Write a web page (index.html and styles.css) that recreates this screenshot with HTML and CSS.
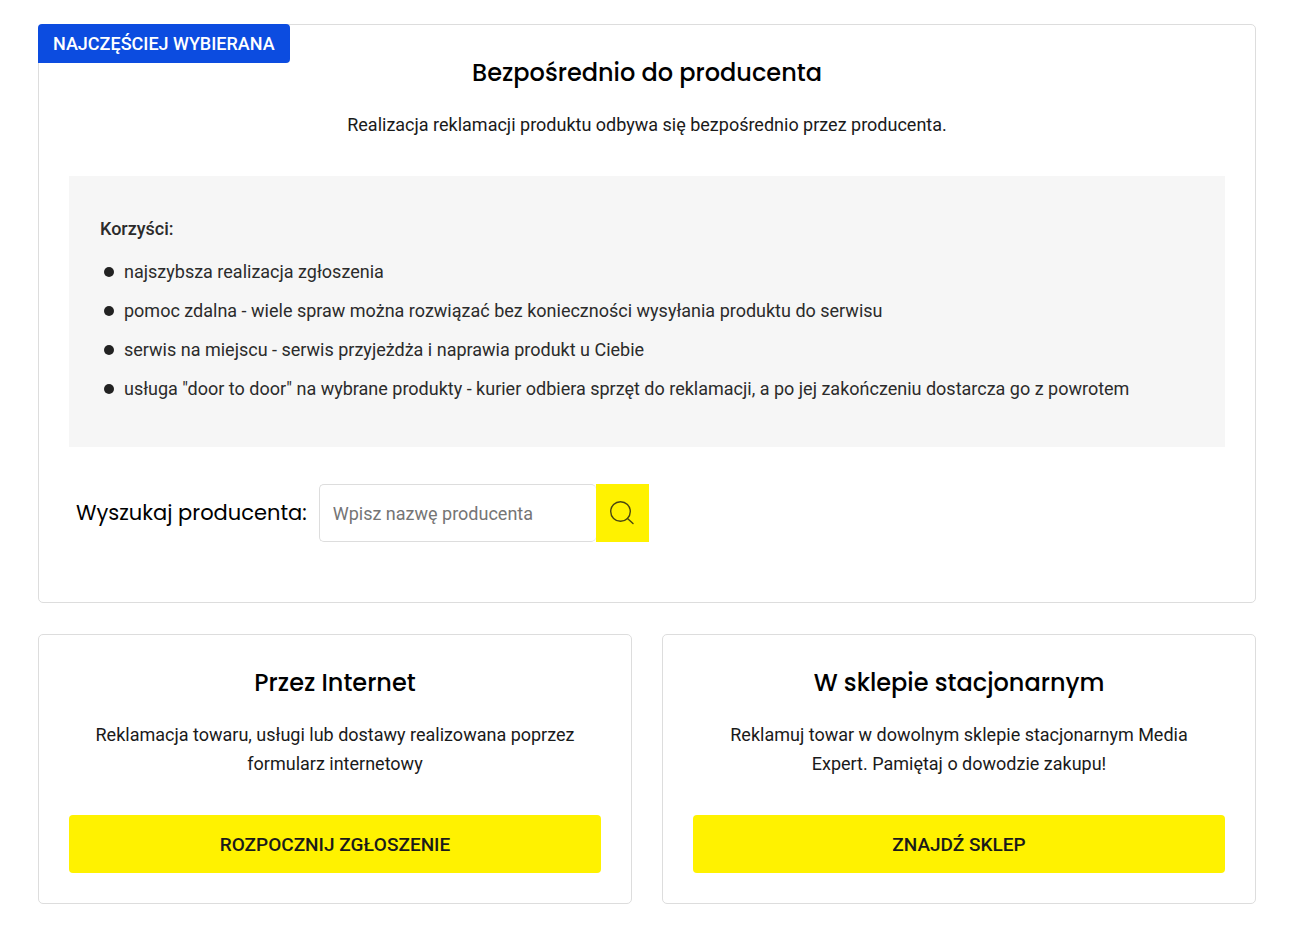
FILE: index.html
```
<!DOCTYPE html>
<html lang="pl">
<head>
<meta charset="utf-8">
<title>Reklamacje</title>
<link rel="stylesheet" href="styles.css">
</head>
<body>
<main class="options">
  <section class="card card-main">
    <span class="badge">NAJCZĘŚCIEJ WYBIERANA</span>
    <h2 class="title">Bezpośrednio do producenta</h2>
    <p class="lead">Realizacja reklamacji produktu odbywa się bezpośrednio przez producenta.</p>
    <div class="benefits">
      <h3 class="benefits-title">Korzyści:</h3>
      <ul class="benefits-list">
        <li>najszybsza realizacja zgłoszenia</li>
        <li>pomoc zdalna - wiele spraw można rozwiązać bez konieczności wysyłania produktu do serwisu</li>
        <li>serwis na miejscu - serwis przyjeżdża i naprawia produkt u Ciebie</li>
        <li>usługa "door to door" na wybrane produkty - kurier odbiera sprzęt do reklamacji, a po jej zakończeniu dostarcza go z powrotem</li>
      </ul>
    </div>
    <form class="search">
      <label class="search-label" for="producer">Wyszukaj producenta:</label>
      <div class="search-box">
        <input class="search-input" id="producer" type="text" placeholder="Wpisz nazwę producenta">
        <button class="search-button" type="button" aria-label="Szukaj">
          <svg width="26" height="26" viewBox="0 0 26 26" fill="none" stroke="#4a4710" stroke-width="1.4" stroke-linecap="round"><circle cx="11.5" cy="11.5" r="9.8"/><path d="M18.5 18.5 24 23.5"/></svg>
        </button>
      </div>
    </form>
  </section>
  <div class="pair">
    <section class="card card-small">
      <h2 class="title">Przez Internet</h2>
      <p class="lead">Reklamacja towaru, usługi lub dostawy realizowana poprzez formularz internetowy</p>
      <button class="action" type="button">ROZPOCZNIJ ZGŁOSZENIE</button>
    </section>
    <section class="card card-small">
      <h2 class="title">W sklepie stacjonarnym</h2>
      <p class="lead">Reklamuj towar w dowolnym sklepie stacjonarnym Media Expert. Pamiętaj o dowodzie zakupu!</p>
      <button class="action" type="button">ZNAJDŹ SKLEP</button>
    </section>
  </div>
</main>
</body>
</html>
```
FILE: styles.css
```
* { box-sizing: border-box; }
body {
  margin: 0;
  background: #fff;
  color: #1a1a1a;
  font: 18px/29px Roboto, "Liberation Sans", sans-serif;
}
.options {
  display: grid;
  gap: 31px;
  padding: 24px 34px 34px 38px;
}
.card {
  position: relative;
  border: 1px solid #ddd;
  border-radius: 5px;
  padding: 30px;
}
.card-main { padding-bottom: 60px; }
.badge {
  position: absolute;
  top: -1px;
  left: -1px;
  padding: 0 15px;
  border-radius: 4px 4px 4px 0;
  background: #0c4ce0;
  color: #fff;
  font-size: 18px;
  font-weight: 500;
  line-height: 39px;
}
.title {
  margin: 0;
  color: #000;
  font: 500 24px/36px Poppins, Lato, sans-serif;
  text-align: center;
}
.lead {
  margin: 19px 0 37px;
  padding: 0 8px;
  text-align: center;
}
.benefits {
  padding: 38px 31px 44px;
  background: #f6f6f6;
  color: #2b2b2b;
}
.benefits-title {
  margin: 0 0 14px;
  font-size: 18px;
  font-weight: 500;
  line-height: 29px;
}
.benefits-list {
  display: grid;
  gap: 10px;
  margin: 0;
  padding: 0;
  list-style: none;
}
.benefits-list li {
  display: flex;
  align-items: center;
  gap: 10px;
  padding-left: 4px;
}
.benefits-list li::before {
  content: "";
  flex: none;
  width: 10px;
  height: 10px;
  border-radius: 50%;
  background: #222;
}
.search {
  display: flex;
  align-items: center;
  gap: 12px;
  margin-top: 37px;
  padding-left: 7px;
}
.search-label {
  color: #000;
  font: 400 21px/32px Poppins, Lato, sans-serif;
}
.search-box { display: flex; }
.search-input {
  width: 277px;
  height: 58px;
  padding: 0 13px;
  border: 1px solid #ddd;
  border-right: 0;
  border-radius: 5px;
  background: #fff;
  color: #1a1a1a;
  font: 18px Roboto, sans-serif;
}
.search-input::placeholder { color: #757575; }
.search-button {
  display: grid;
  place-items: center;
  width: 53px;
  height: 58px;
  padding: 0;
  border: 0;
  background: #fff200;
}
.pair {
  display: grid;
  grid-template-columns: 1fr 1fr;
  gap: 30px;
}
.action {
  width: 100%;
  height: 58px;
  border: 0;
  border-radius: 4px;
  background: #fff200;
  color: #1a1a1a;
  font: 500 19px Roboto, sans-serif;
}
```
